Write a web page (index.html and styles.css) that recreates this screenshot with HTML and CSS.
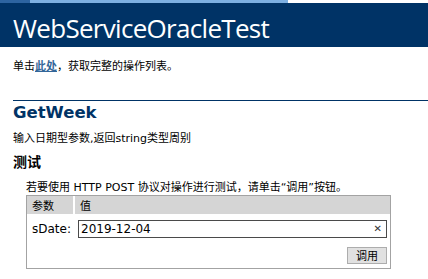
FILE: index.html
```html
<!DOCTYPE html>
<html lang="zh-CN">
<head>
<meta charset="utf-8">
<title>WebServiceOracleTest</title>
<link rel="stylesheet" href="styles.css">
</head>
<body>
<div class="topstrip"><span class="strip-a"></span><span class="strip-b"></span><span class="strip-c"></span></div>
<div class="heading"><span class="title">WebServiceOracleTest</span></div>
<div class="content">
  <p class="intro">单击<a href="#">此处</a>，获取完整的操作列表。</p>
  <div class="rule"></div>
  <h2 class="opname">GetWeek</h2>
  <p class="desc">输入日期型参数,返回string类型周别</p>
  <h3 class="testhead">测试</h3>
  <div class="testbox">
    <p class="instr">若要使用 HTTP POST 协议对操作进行测试，请单击“调用”按钮。</p>
    <table class="params">
      <tr>
        <th class="pname">参数</th>
        <th class="pval">值</th>
      </tr>
      <tr>
        <td class="label">sDate:</td>
        <td class="field"><div class="inputwrap"><input class="datein" type="text" value="2019-12-04" autofocus><span class="clear">✕</span></div></td>
      </tr>
      <tr>
        <td colspan="2" class="actions"><button class="invoke" type="button">调用</button></td>
      </tr>
    </table>
  </div>
</div>
</body>
</html>
```
FILE: styles.css
```css
html, body {
  margin: 0;
  padding: 0;
  background: #ffffff;
  font-family: "DejaVu Sans", "Noto Sans CJK SC", sans-serif;
  font-size: 11px;
  color: #000000;
}

.topstrip {
  display: flex;
  height: 3px;
}
.strip-a { width: 30px; background: #2d64a0; }
.strip-b { width: 258px; background: #7db0e2; }
.strip-c { flex: 1; background: #ffffff; }

.heading {
  background: #003366;
  height: 44px;
  padding-left: 13px;
  display: flex;
  align-items: flex-end;
}
.title {
  color: #ffffff;
  font-family: "Open Sans", "Noto Sans", sans-serif;
  font-size: 26px;
  line-height: 26px;
  letter-spacing: -0.7px;
  padding-bottom: 6px;
}

.content {
  padding-left: 13px;
}

.intro {
  margin: 13px 0 0 0;
  line-height: 14px;
  height: 14px;
}
.intro a {
  color: #336699;
  font-weight: bold;
  text-decoration: underline;
}

.rule {
  margin-top: 26px;
  height: 1px;
  background: #003366;
}

.opname {
  margin: 2px 0 0 0;
  font-family: "DejaVu Sans", sans-serif;
  font-weight: bold;
  font-size: 16.5px;
  line-height: 20px;
  color: #003366;
}

.desc {
  margin: 9px 0 0 0;
  line-height: 14px;
}

.testhead {
  margin: 8px 0 0 0;
  font-size: 14px;
  line-height: 16px;
  font-weight: bold;
}

.testbox {
  padding-left: 13px;
}

.instr {
  margin: 11px 0 0 0;
  line-height: 14px;
}

.params {
  width: 365px;
  border: 1px solid #a3a3a3;
  border-collapse: separate;
  border-spacing: 0;
}
.params th {
  background: #d5d5d5;
  font-weight: normal;
  text-align: left;
  height: 18px;
  padding: 0 0 0 5px;
  font-size: 11px;
}
.params th.pname {
  width: 41px;
  border-right: 2px solid #ffffff;
}
.params td.label {
  padding: 6px 0 0 5px;
  font-size: 12px;
  vertical-align: middle;
}
.params td.field {
  padding: 6px 3px 0 3px;
}
.inputwrap {
  position: relative;
  height: 18px;
}
.datein {
  box-sizing: border-box;
  width: 100%;
  height: 18px;
  margin: 0;
  border: 1px solid #4a4a4a;
  padding: 0 20px 0 2px;
  font-family: "DejaVu Sans", sans-serif;
  font-size: 12px;
  outline: none;
  color: #000;
}
.clear {
  position: absolute;
  right: 5px;
  top: 0;
  line-height: 18px;
  font-size: 10px;
  color: #333;
}
.params td.actions {
  text-align: right;
  padding: 9px 3px 4px 0;
}
.invoke {
  width: 40px;
  height: 17px;
  padding: 0;
  margin: 0;
  background: #e1e1e1;
  border: 1px solid #adadad;
  font-family: "Noto Sans CJK SC", sans-serif;
  font-size: 11px;
  line-height: 15px;
  color: #000;
}
```
